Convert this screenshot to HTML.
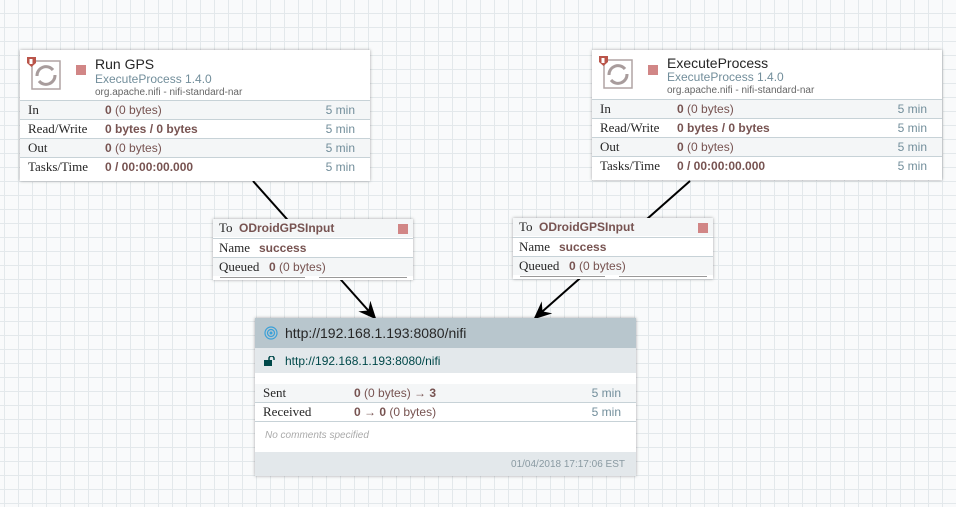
<!DOCTYPE html><html><head><style>
body{margin:0;width:956px;height:507px;overflow:hidden;font-family:"Liberation Sans",sans-serif;
background-color:#f9fafb;background-image:linear-gradient(#e3e8eb 1px,transparent 1px),linear-gradient(90deg,#e3e8eb 1px,transparent 1px);background-size:14px 14px;background-position:4px 13px;position:relative}
.box{position:absolute;background:#fff;box-shadow:0 0 3px rgba(0,0,0,.35);}
.row{position:absolute;left:0;right:0;height:18px;border-top:1px solid #c7d2d7;font-size:12px;line-height:18px}
.row .l{position:absolute;left:8px;font-family:"Liberation Serif",serif;font-size:13px;color:#262626}
.row .v{position:absolute;left:85px;color:#775351}
.row .t{position:absolute;right:15px;color:#728e9b}
b{font-weight:bold;color:#775351}
.g{background:#f4f6f7}
.stop{position:absolute;width:10px;height:10px;background:#d18686}
.ttl{position:absolute;font-size:14px;color:#262626}
.typ{position:absolute;font-size:12px;color:#728e9b}
.bnd{position:absolute;font-size:10px;color:#666}
</style></head><body>
<svg width="956" height="507" style="position:absolute;left:0;top:0">
<defs><marker id="a" markerWidth="10" markerHeight="10" refX="8" refY="5" orient="auto"><path d="M0,1 L9,5 L0,9 L3,5z" fill="#000"/></marker></defs>
<line x1="253" y1="181" x2="375" y2="318" stroke="#000" stroke-width="2" marker-end="url(#a)"/>
<line x1="690" y1="181" x2="535" y2="318" stroke="#000" stroke-width="2" marker-end="url(#a)"/>
</svg>

<div class="box" style="left:20px;top:50px;width:350px;height:131px">
<svg style="position:absolute;left:6px;top:6px" width="36" height="38"><rect x="6" y="5" width="28" height="28" fill="none" stroke="#b0a4a4" stroke-width="1.5"/><path d="M11 20a9 9 0 0 1 16-6M29 19a9 9 0 0 1-16 6" stroke="#a89c9c" stroke-width="3" fill="none"/><path d="M1 1h9v6l-4.5 4-4.5-4z" fill="#ba554a"/><rect x="3.5" y="3" width="3" height="5" fill="#fff"/></svg>
<div class="stop" style="left:56px;top:15px"></div>
<div class="ttl" style="left:75px;top:6px">Run GPS</div>
<div class="typ" style="left:75px;top:22px">ExecuteProcess 1.4.0</div>
<div class="bnd" style="left:75px;top:37px">org.apache.nifi - nifi-standard-nar</div>
<div class="row g" style="top:50px"><span class="l">In</span><span class="v"><b>0</b> (0 bytes)</span><span class="t">5 min</span></div>
<div class="row" style="top:69px"><span class="l">Read/Write</span><span class="v"><b>0 bytes / 0 bytes</b></span><span class="t">5 min</span></div>
<div class="row g" style="top:88px"><span class="l">Out</span><span class="v"><b>0</b> (0 bytes)</span><span class="t">5 min</span></div>
<div class="row" style="top:107px"><span class="l">Tasks/Time</span><span class="v"><b>0 / 00:00:00.000</b></span><span class="t">5 min</span></div>
</div>

<div class="box" style="left:592px;top:50px;width:350px;height:130px">
<svg style="position:absolute;left:6px;top:5px" width="36" height="38"><rect x="6" y="5" width="28" height="28" fill="none" stroke="#b0a4a4" stroke-width="1.5"/><path d="M11 20a9 9 0 0 1 16-6M29 19a9 9 0 0 1-16 6" stroke="#a89c9c" stroke-width="3" fill="none"/><path d="M1 1h9v6l-4.5 4-4.5-4z" fill="#ba554a"/><rect x="3.5" y="3" width="3" height="5" fill="#fff"/></svg>
<div class="stop" style="left:56px;top:15px"></div>
<div class="ttl" style="left:75px;top:5px">ExecuteProcess</div>
<div class="typ" style="left:75px;top:20px">ExecuteProcess 1.4.0</div>
<div class="bnd" style="left:75px;top:35px">org.apache.nifi - nifi-standard-nar</div>
<div class="row g" style="top:49px"><span class="l">In</span><span class="v"><b>0</b> (0 bytes)</span><span class="t">5 min</span></div>
<div class="row" style="top:68px"><span class="l">Read/Write</span><span class="v"><b>0 bytes / 0 bytes</b></span><span class="t">5 min</span></div>
<div class="row g" style="top:87px"><span class="l">Out</span><span class="v"><b>0</b> (0 bytes)</span><span class="t">5 min</span></div>
<div class="row" style="top:106px"><span class="l">Tasks/Time</span><span class="v"><b>0 / 00:00:00.000</b></span><span class="t">5 min</span></div>
</div>

<div class="box" style="left:213px;top:219px;width:200px;height:61px">
<div class="row g" style="top:0;border:0"><span class="l" style="left:6px">To</span><span class="v" style="left:26px"><b>ODroidGPSInput</b></span><div class="stop" style="left:185px;top:5px"></div></div>
<div class="row" style="top:19px"><span class="l" style="left:6px">Name</span><span class="v" style="left:46px"><b>success</b></span></div>
<div class="row g" style="top:38px"><span class="l" style="left:6px">Queued</span><span class="v" style="left:56px"><b>0</b> (0 bytes)</span></div>
<div style="position:absolute;left:7px;top:58px;width:85px;height:1px;background:#999"></div>
<div style="position:absolute;left:106px;top:58px;width:88px;height:1px;background:#999"></div>
</div>

<div class="box" style="left:513px;top:218px;width:200px;height:61px">
<div class="row g" style="top:0;border:0"><span class="l" style="left:6px">To</span><span class="v" style="left:26px"><b>ODroidGPSInput</b></span><div class="stop" style="left:185px;top:5px"></div></div>
<div class="row" style="top:19px"><span class="l" style="left:6px">Name</span><span class="v" style="left:46px"><b>success</b></span></div>
<div class="row g" style="top:38px"><span class="l" style="left:6px">Queued</span><span class="v" style="left:56px"><b>0</b> (0 bytes)</span></div>
<div style="position:absolute;left:7px;top:58px;width:85px;height:1px;background:#999"></div>
<div style="position:absolute;left:106px;top:58px;width:88px;height:1px;background:#999"></div>
</div>

<div class="box" style="left:255px;top:318px;width:381px;height:158px">
<div style="position:absolute;left:0;top:0;right:0;height:30px;background:#b8c6cd"></div>
<svg style="position:absolute;left:9px;top:8px" width="14" height="14"><circle cx="7" cy="7" r="6" fill="none" stroke="#3aa0d8" stroke-width="1.2"/><circle cx="7" cy="7" r="3.5" fill="none" stroke="#3aa0d8" stroke-width="1.2"/><circle cx="7" cy="7" r="1.5" fill="#3aa0d8"/></svg>
<div class="ttl" style="left:30px;top:7px">http://192.168.1.193:8080/nifi</div>
<div style="position:absolute;left:0;top:30px;right:0;height:25px;background:#e3e8eb"></div>
<svg style="position:absolute;left:9px;top:38px" width="12" height="10"><rect x="0" y="4" width="8" height="6" fill="#004849"/><path d="M5 4V2.5a2.5 2.5 0 0 1 5 0V4" stroke="#004849" stroke-width="1.5" fill="none"/></svg>
<div style="position:absolute;left:30px;top:36px;font-size:12px;color:#004849">http://192.168.1.193:8080/nifi</div>
<div class="row g" style="top:66px;border:0"><span class="l">Sent</span><span class="v" style="left:99px"><b>0</b> (0 bytes) → <b>3</b></span><span class="t">5 min</span></div>
<div class="row" style="top:84px"><span class="l">Received</span><span class="v" style="left:99px"><b>0</b> → <b>0</b> (0 bytes)</span><span class="t">5 min</span></div>
<div style="position:absolute;left:0;right:0;top:103px;border-top:1px solid #c7d2d7"></div>
<div style="position:absolute;left:10px;top:112px;font-size:10px;font-style:italic;color:#aaa">No comments specified</div>
<div style="position:absolute;left:0;right:0;top:134px;height:24px;background:#e3e8eb"></div>
<div style="position:absolute;right:11px;top:141px;font-size:10px;color:#8a9aa2">01/04/2018 17:17:06 EST</div>
</div>
</body></html>
